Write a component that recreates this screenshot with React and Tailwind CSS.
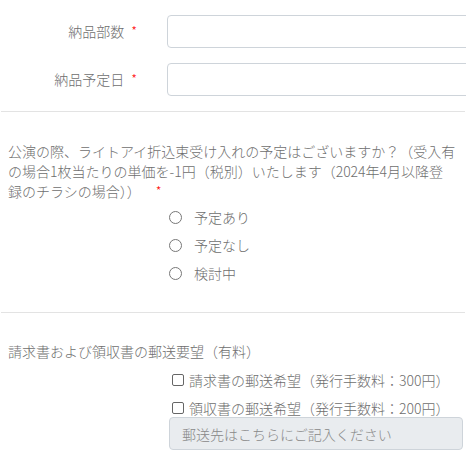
import React from 'react';

const radios = ['予定あり', '予定なし', '検討中'];
const checks = ['請求書の郵送希望（発行手数料：300円）', '領収書の郵送希望（発行手数料：200円）'];

function Req({ gap = 'ml-[7px]' }) {
  return <span className={`${gap} relative top-[-1px] text-[13px] text-[#ff0000]`}>*</span>;
}

export default function App() {
  return (
    <div className="w-[466px] h-[464px] overflow-hidden bg-white font-['Noto_Sans_CJK_JP','Noto_Sans',sans-serif] font-light text-[14px] leading-[20px] text-[#6e6e6e]">
      {/* delivery fields */}
      <div className="pt-[15px] space-y-[15px]">
        {['納品部数', '納品予定日'].map((label) => (
          <div key={label} className="flex items-center">
            <div className="w-[137px] shrink-0 text-right whitespace-nowrap">
              {label}
              <Req />
            </div>
            <input
              type="text"
              className="ml-[30px] w-[320px] shrink-0 h-[33px] border border-[#ced4da] rounded-[4px] bg-white px-3 focus:outline-none"
            />
          </div>
        ))}
      </div>

      <hr className="mt-[15px] mx-[1px] border-0 border-t border-[#e3e3e3]" />

      {/* light-eye question */}
      <div className="mt-[29px] px-[8px]">
        <p className="w-[456px] whitespace-nowrap">
          公演の際、ライトアイ折込束受け入れの予定はございますか？（受入有
          <br />
          の場合1枚当たりの単価を-1円（税別）いたします（2024年4月以降登
          <br />
          録のチラシの場合））
          <Req gap="ml-[15px]" />
        </p>
      </div>
      <div className="mt-[1px] pl-[169px]">
        {radios.map((r) => (
          <label key={r} className="flex items-center h-[28px] cursor-pointer">
            <span className="w-[13px] h-[13px] rounded-full border border-[#777] bg-white shrink-0" />
            <span className="ml-[12px]">{r}</span>
          </label>
        ))}
      </div>

      <hr className="mt-[25px] mx-[1px] border-0 border-t border-[#e3e3e3]" />

      {/* mailing request */}
      <div className="mt-[28px] px-[8px]">
        <p>請求書および領収書の郵送要望（有料）</p>
      </div>
      <div className="pl-[169px] pr-[3px]">
        {checks.map((c, i) => (
          <label key={c} className={`flex items-center cursor-pointer ${i === 0 ? 'mt-[9px] h-[20px]' : 'mt-[8px] h-[19px]'}`}>
            <span className="ml-[3px] w-[12px] h-[12px] rounded-[2px] border border-[#666] bg-white shrink-0" />
            <span className="ml-[5px] whitespace-nowrap">{c}</span>
          </label>
        ))}
        <input
          type="text"
          disabled
          placeholder="郵送先はこちらにご記入ください"
          className="w-full h-[33px] border border-[#ced4da] rounded-[4px] bg-[#e9ecef] px-[12px] placeholder:text-[#888] text-[14px]"
        />
      </div>
    </div>
  );
}
